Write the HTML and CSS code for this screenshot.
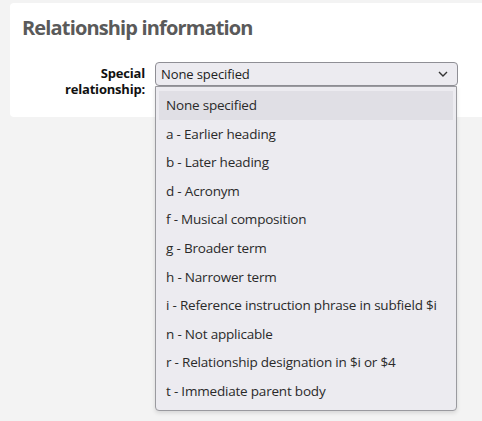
FILE: index.html
```html
<!DOCTYPE html>
<html lang="en">
<head>
  <meta charset="UTF-8" />
  <title>Relationship information</title>
  <link rel="stylesheet" href="styles.css">
</head>
<body>

  <div class="card">
    <h2>Relationship information</h2>

    <div class="field">
      <label class="field-label">Special relationship:</label>
      <div class="select-wrap">
        <div class="select">
          <span>None specified</span>
          <svg class="chevron" width="10" height="6" viewBox="0 0 10 6">
            <path d="M1 1 L5 5 L9 1" fill="none" stroke="#333" stroke-width="1.4" />
          </svg>
        </div>

        <!-- open dropdown list -->
        <ul class="options">
          <li class="selected">None specified</li>
          <li>a - Earlier heading</li>
          <li>b - Later heading</li>
          <li>d - Acronym</li>
          <li>f - Musical composition</li>
          <li>g - Broader term</li>
          <li>h - Narrower term</li>
          <li>i - Reference instruction phrase in subfield $i</li>
          <li>n - Not applicable</li>
          <li>r - Relationship designation in $i or $4</li>
          <li>t - Immediate parent body</li>
        </ul>
      </div>
    </div>
  </div>

</body>
</html>
```

FILE: styles.css
```css
* {
  box-sizing: border-box;
}

html, body {
  min-height: 100vh;
}

body {
  background-color: #f3f3f3;
  color: #333;
  font-family: 'Open Sans', 'Noto Sans', sans-serif;
  margin: 0;
  padding: 3px 0 0 10px;
}

.card {
  background-color: #fff;
  border-radius: 4px 0 0 4px;
  height: 114px;
  padding: 12px 12px 0 12px;
}

.card h2 {
  margin: 0;
  font-size: 20px;
  font-weight: bold;
  color: #5a5a5a;
  line-height: 26px;
  letter-spacing: -0.85px;
}

.field {
  display: flex;
  align-items: flex-start;
  margin-top: 21px;
}

.field-label {
  width: 123px;
  text-align: right;
  font-size: 13px;
  font-weight: bold;
  line-height: 16px;
  padding-top: 3px;
  color: #111;
  letter-spacing: -0.2px;
}

.select-wrap {
  position: relative;
  margin-left: 10px;
}

.select {
  width: 303px;
  height: 24px;
  border: 1px solid #8f8f95;
  border-radius: 4px;
  background-color: #ecebf0;
  display: flex;
  align-items: center;
  justify-content: space-between;
  padding: 0 9px 0 5px;
  font-size: 13px;
  color: #222;
  letter-spacing: -0.1px;
}

.chevron {
  display: block;
}

.options {
  position: absolute;
  top: 24px;
  left: 0;
  width: 302px;
  margin: 0;
  padding: 4px 3px;
  list-style: none;
  background-color: #ecebf0;
  border: 1px solid #9a9a9f;
  border-radius: 0 0 4px 4px;
  box-shadow: 0 2px 4px rgba(0,0,0,0.12);
}

.options li {
  height: 28.6px;
  line-height: 28.6px;
  padding-left: 7px;
  font-size: 13.5px;
  color: #2a2a2a;
  white-space: nowrap;
  letter-spacing: -0.2px;
}

.options li.selected {
  background-color: #e0dfe5;
}
```
